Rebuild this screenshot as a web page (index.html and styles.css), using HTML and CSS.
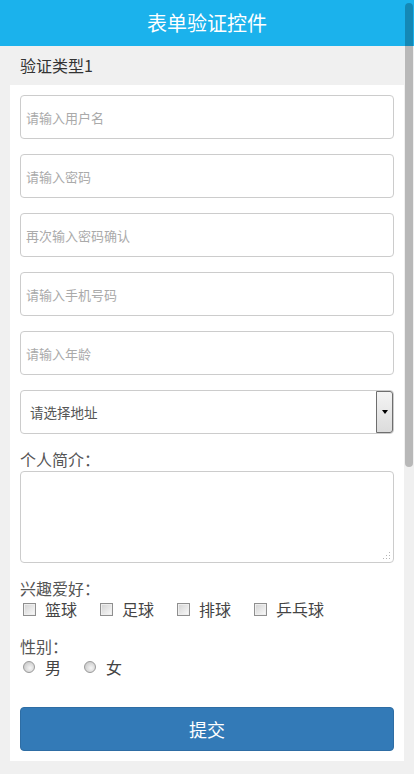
FILE: index.html
```html
<!DOCTYPE html>
<html lang="zh-CN">
<head>
<meta charset="utf-8">
<title>表单验证控件</title>
<link rel="stylesheet" href="styles.css">
</head>
<body>
<header class="topbar">表单验证控件</header>
<div class="section-title">验证类型1</div>
<form class="card">
  <input class="field" type="text" placeholder="请输入用户名">
  <input class="field" type="password" placeholder="请输入密码">
  <input class="field" type="password" placeholder="再次输入密码确认">
  <input class="field" type="text" placeholder="请输入手机号码">
  <input class="field" type="text" placeholder="请输入年龄">
  <div class="select-box">
    <span class="select-text">请选择地址</span>
    <span class="select-btn"><span class="arrow"></span></span>
  </div>
  <div class="label">个人简介：</div>
  <div class="ta-wrap">
    <textarea class="ta"></textarea>
    <svg class="grip" width="8" height="8" viewBox="0 0 8 8"><g fill="#b5b5b5"><rect x="6" y="0" width="1" height="1"/><rect x="3" y="3" width="1" height="1"/><rect x="6" y="3" width="1" height="1"/><rect x="0" y="6" width="1" height="1"/><rect x="3" y="6" width="1" height="1"/><rect x="6" y="6" width="1" height="1"/></g></svg>
  </div>
  <div class="label label-gap">兴趣爱好：</div>
  <div class="options">
    <label class="opt"><span class="cb"></span>篮球</label>
    <label class="opt"><span class="cb"></span>足球</label>
    <label class="opt"><span class="cb"></span>排球</label>
    <label class="opt"><span class="cb"></span>乒乓球</label>
  </div>
  <div class="label label-gap2">性别：</div>
  <div class="options">
    <label class="opt"><span class="rd"></span>男</label>
    <label class="opt"><span class="rd"></span>女</label>
  </div>
  <button class="submit" type="button">提交</button>
</form>
<div class="scroll-thumb"></div>
</body>
</html>
```
FILE: styles.css
```css
html, body {
  margin: 0;
  padding: 0;
}
body {
  background: #f0f0f0;
  font-family: "Noto Sans CJK SC", "Noto Sans", sans-serif;
  width: 414px;
  height: 774px;
  overflow: hidden;
}
.topbar {
  height: 46px;
  line-height: 46px;
  background: #1bb2ec;
  color: #fff;
  font-size: 20px;
  text-align: center;
}
.section-title {
  height: 39px;
  line-height: 39px;
  padding-left: 20px;
  font-size: 16px;
  color: #333;
}
.card {
  margin: 0 10px;
  background: #fff;
  padding: 10px 10px 10px;
  display: flex;
  flex-direction: column;
}
.field {
  box-sizing: border-box;
  height: 44px;
  margin: 0 0 15px;
  border: 1px solid #ccc;
  border-radius: 4px;
  padding: 0 5px;
  font-family: inherit;
  font-size: 13px;
  color: #555;
  outline: none;
}
.field::placeholder {
  color: #aaa;
}
.select-box {
  box-sizing: border-box;
  height: 44px;
  border: 1px solid #ccc;
  border-radius: 4px;
  display: flex;
  align-items: stretch;
  margin-bottom: 15px;
}
.select-text {
  flex: 1;
  display: flex;
  align-items: center;
  padding-left: 9px;
  font-size: 13.5px;
  color: #555;
}
.select-btn {
  width: 15px;
  border: 1px solid #6e6e6e;
  border-radius: 0 3px 3px 0;
  background: linear-gradient(to bottom, #f4f4f4, #dcdcdc);
  display: flex;
  align-items: center;
  justify-content: center;
}
.arrow {
  width: 0;
  height: 0;
  border-left: 3.5px solid transparent;
  border-right: 3.5px solid transparent;
  border-top: 4px solid #000;
  margin-top: -1px;
}
.label {
  font-size: 16px;
  line-height: 20px;
  color: #555;
  margin-bottom: 2px;
}
.ta-wrap {
  position: relative;
  height: 92px;
}
.ta {
  box-sizing: border-box;
  width: 100%;
  height: 92px;
  border: 1px solid #ccc;
  border-radius: 4px;
  resize: none;
  display: block;
  outline: none;
}
.grip {
  position: absolute;
  right: 3px;
  bottom: 3px;
}
.label-gap {
  margin-top: 15px;
  margin-bottom: 1px;
}
.label-gap2 {
  margin-top: 17px;
  margin-bottom: 1px;
}
.options {
  display: flex;
  height: 20px;
  align-items: center;
}
.opt {
  display: flex;
  align-items: center;
  font-size: 16px;
  line-height: 20px;
  color: #444;
  margin-right: 20px;
}
.cb {
  box-sizing: border-box;
  width: 13px;
  height: 13px;
  margin: 0 9px 0 3px;
  border: 1px solid #8f8f8f;
  background: linear-gradient(135deg, #d2d2d2, #f2f2f2 80%, #fff);
  box-shadow: inset 0 0 0 1px #eee;
}
.rd {
  box-sizing: border-box;
  width: 12px;
  height: 12px;
  margin: 0 10px 0 3px;
  border-radius: 50%;
  border: 1px solid #9a9a9a;
  background: radial-gradient(circle at 60% 60%, #f5f5f5, #cfcfcf 70%, #bdbdbd);
}
.submit {
  margin-top: 30px;
  height: 44px;
  border: 1px solid #2e6da4;
  border-radius: 4px;
  background: #337ab7;
  color: #fff;
  font-family: inherit;
  font-size: 18px;
}
.scroll-thumb {
  position: fixed;
  top: 3px;
  right: 1px;
  width: 8px;
  height: 464px;
  border-radius: 4px;
  background: rgba(0, 0, 0, 0.23);
}
```
